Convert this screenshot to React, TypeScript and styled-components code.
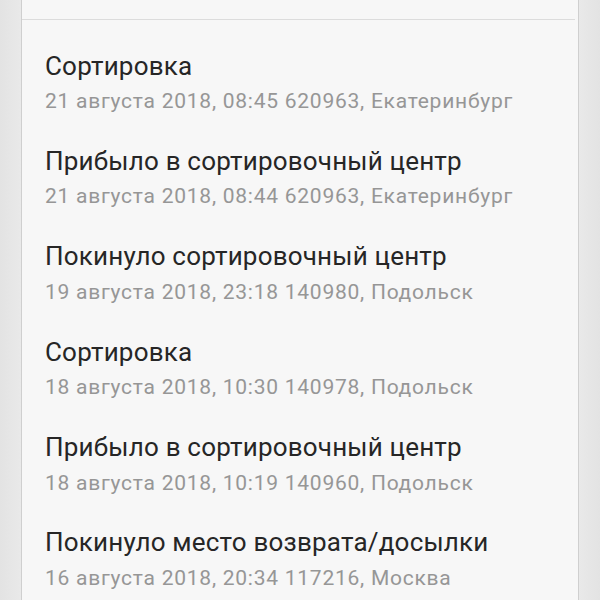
import React from "react";
import styled, {createGlobalStyle} from "styled-components";

interface TrackEvent {
    title: string;
    date: string;
    place: string;
}

const events: TrackEvent[] = [
    {title: "Сортировка", date: "21 августа 2018, 08:45", place: "620963, Екатеринбург"},
    {title: "Прибыло в сортировочный центр", date: "21 августа 2018, 08:44", place: "620963, Екатеринбург"},
    {title: "Покинуло сортировочный центр", date: "19 августа 2018, 23:18", place: "140980, Подольск"},
    {title: "Сортировка", date: "18 августа 2018, 10:30", place: "140978, Подольск"},
    {title: "Прибыло в сортировочный центр", date: "18 августа 2018, 10:19", place: "140960, Подольск"},
    {title: "Покинуло место возврата/досылки", date: "16 августа 2018, 20:34", place: "117216, Москва"},
];

const App: React.FC = () => {
    return (
        <>
            <GlobalStyle/>
            <Screen>
                <Card>
                    <CardHeader/>
                    <EventList>
                        {events.map((ev, i) => (
                            <EventRow key={i}>
                                <EventTitle>{ev.title}</EventTitle>
                                <EventMeta>{ev.date} {ev.place}</EventMeta>
                            </EventRow>
                        ))}
                    </EventList>
                </Card>
            </Screen>
        </>
    );
}

const GlobalStyle = createGlobalStyle`
  html, body {
    margin: 0;
    padding: 0;
    background: #e6e6e6;
  }
  body {
    font-family: Roboto, "Noto Sans", sans-serif;
  }
`

const Screen = styled.div`
  width: 600px;
  height: 600px;
  overflow: hidden;
  padding: 0 21px 0 21px;
  box-sizing: border-box;
  background: linear-gradient(to right, #e3e3e3 0, #e9e9e9 21px, #e9e9e9 579px, #e3e3e3 600px);
`

const Card = styled.div`
  height: 100%;
  background: #f7f7f7;
  border-left: 1px solid #cfcfcf;
  border-right: 1px solid #cfcfcf;
`

const CardHeader = styled.div`
  height: 19px;
  border-bottom: 1px solid #dcdcdc;
  margin-right: 3px;
`

const EventList = styled.div`
  display: flex;
  flex-direction: column;
  padding-left: 23px;
`

const EventRow = styled.div`
  display: flex;
  flex-direction: column;
  gap: 5.5px;
  padding: 29.5px 0 0.4px;
`

const EventTitle = styled.div`
  font-size: 26px;
  line-height: 32px;
  letter-spacing: 0.2px;
  color: #262626;
  white-space: nowrap;
`

const EventMeta = styled.div`
  font-size: 21px;
  line-height: 28px;
  letter-spacing: 0.75px;
  color: #969696;
  white-space: nowrap;
`

export default App;
